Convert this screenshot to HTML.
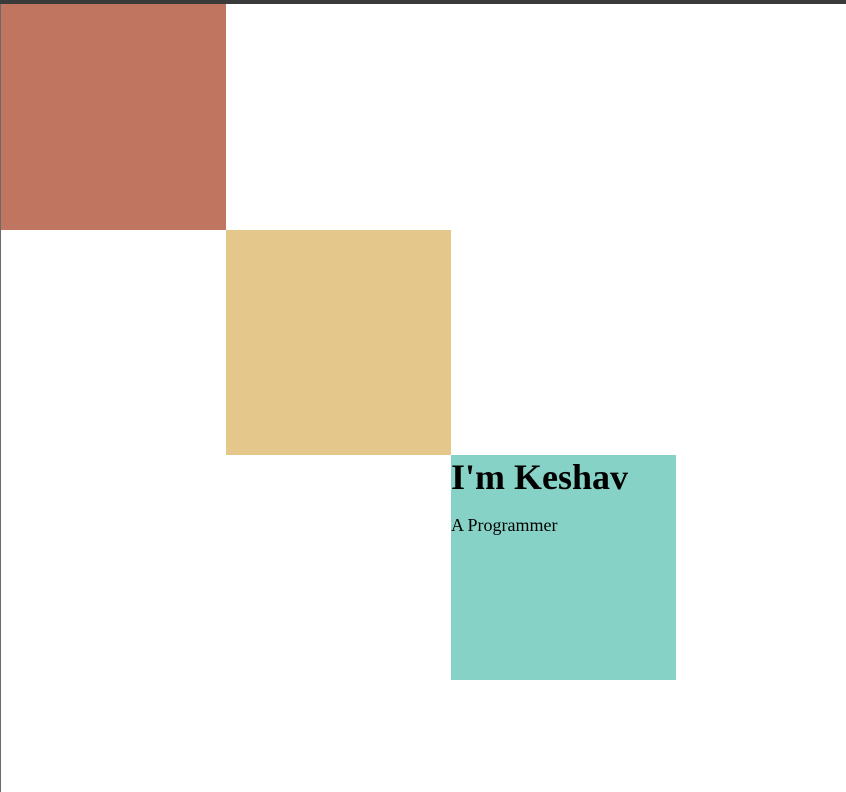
<!DOCTYPE html>
<html><head><style>
html,body{margin:0;padding:0;background:#fff;width:846px;height:792px;overflow:hidden;font-family:"Liberation Serif",serif;}
.top{position:absolute;left:0;top:0;width:846px;height:4px;background:#3a3a3a;}
.left{position:absolute;left:0;top:4px;width:1px;height:788px;background:#6a6a6a;}
.b{position:absolute;width:225px;height:225px;}
h1{margin:0;font-size:36px;line-height:40px;padding-top:2px;white-space:nowrap;}
p{margin:18px 0 0;font-size:18px;line-height:21px;}
</style></head><body>
<div class="top"></div><div class="left"></div>
<div class="b" style="left:1px;top:4px;height:226px;background:#c07561"></div>
<div class="b" style="left:226px;top:230px;background:#e4c78a"></div>
<div class="b" style="left:451px;top:455px;background:#86d2c6"><h1>I'm Keshav</h1><p>A Programmer</p></div>
</body></html>
